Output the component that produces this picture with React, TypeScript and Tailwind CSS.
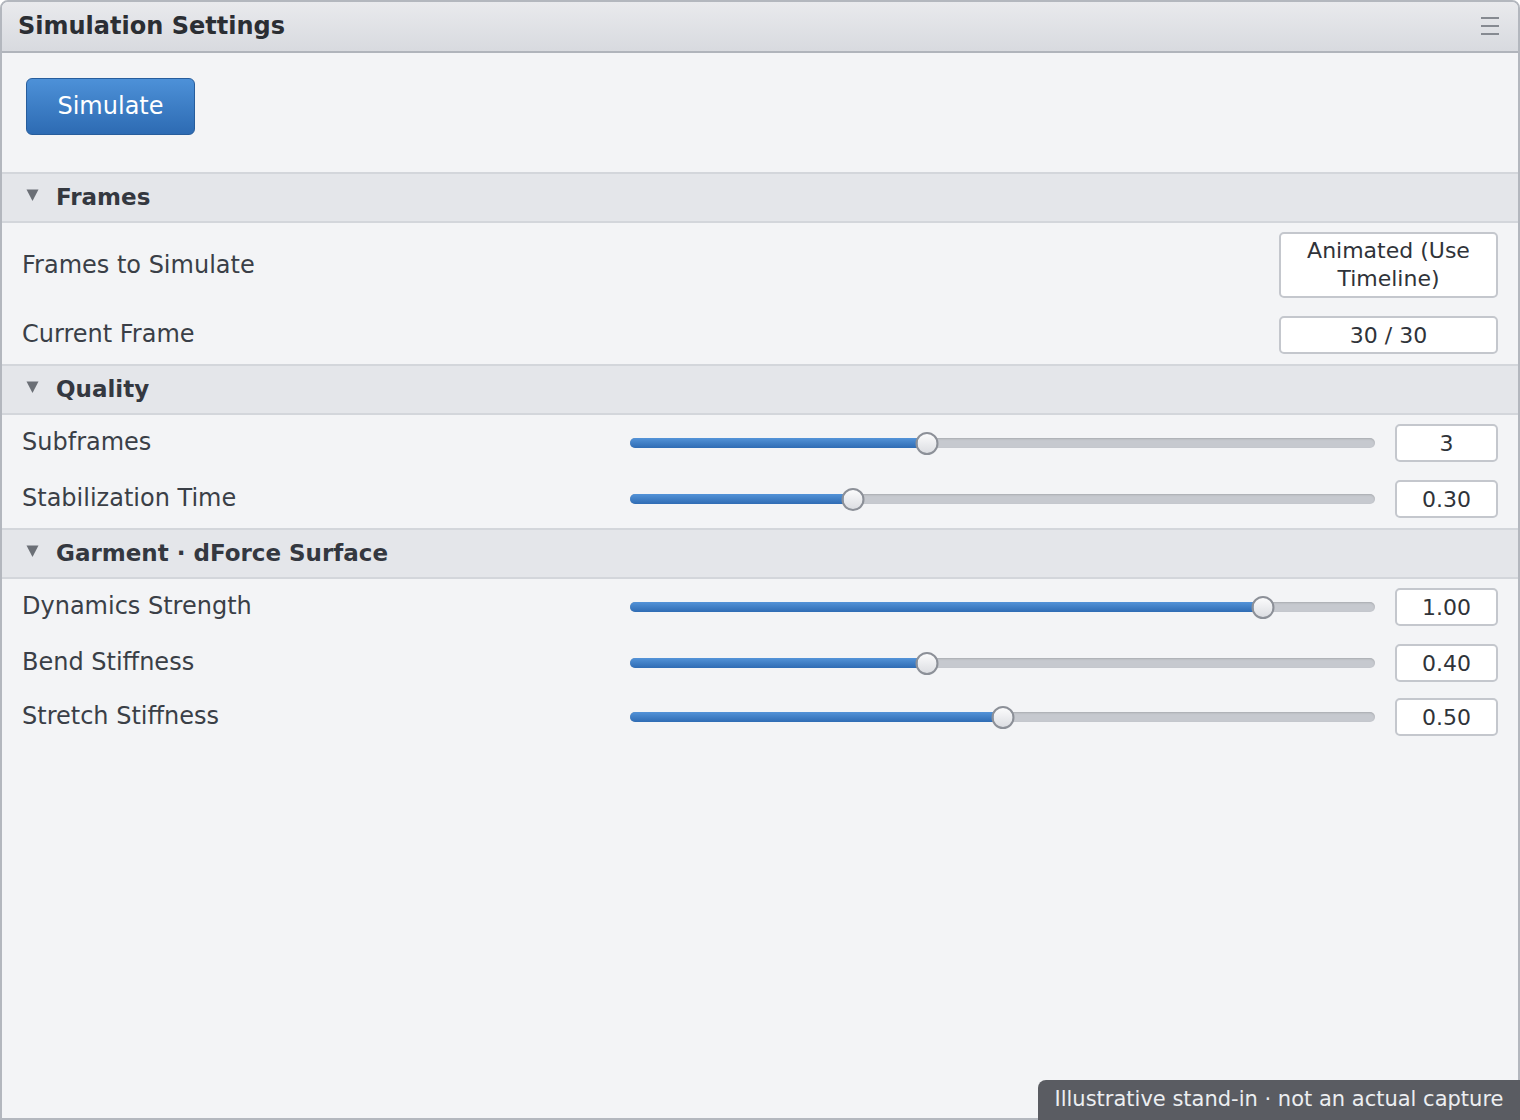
import React from "react";

const font = { fontFamily: '"DejaVu Sans", "Liberation Sans", sans-serif' };

function Tri() {
  return (
    <svg width="13" height="12" viewBox="0 0 13 12" className="shrink-0">
      <polygon points="0.5,0.5 12.5,0.5 6.5,12" fill="#6b6f76" />
    </svg>
  );
}

function SectionHeader({ title }: { title: string }) {
  return (
    <div className="flex h-[51px] shrink-0 items-center gap-[17px] border-y-2 border-[#d3d6db] bg-[#e4e6ea] pl-[24px]">
      <div className="-mt-[6px]">
        <Tri />
      </div>
      <span className="text-[23px] font-bold text-[#343840]">{title}</span>
    </div>
  );
}

function Slider({ pct }: { pct: number }) {
  return (
    <div className="relative h-[24px] flex-1">
      <div className="absolute left-0 right-0 top-[7px] h-[10px] rounded-full bg-[#c6c9cf] shadow-[inset_0_1px_2px_rgba(0,0,0,0.15)]" />
      <div
        className="absolute left-0 top-[7px] h-[10px] rounded-full bg-gradient-to-b from-[#5393d8] to-[#2f6cb4]"
        style={{ width: `${pct}%` }}
      />
      <div
        className="absolute top-[1px] h-[23px] w-[23px] -translate-x-1/2 rounded-full border-2 border-[#8c9098] bg-gradient-to-b from-[#fbfbfc] to-[#dcdee2]"
        style={{ left: `${pct}%` }}
      />
    </div>
  );
}

function SliderRow({ label, pct, value }: { label: string; pct: number; value: string }) {
  return (
    <div className="flex h-[38px] items-center">
      <div className="w-[628px] pl-[20px] text-[24px] text-[#3a3f47] -mt-[2px]">{label}</div>
      <Slider pct={pct} />
      <div className="ml-[20px] mr-[20px] flex h-[38px] w-[103px] items-center justify-center rounded-[5px] border-2 border-[#c4c7cd] bg-white text-[22px] text-[#2f3339]">
        {value}
      </div>
    </div>
  );
}

export default function App() {
  return (
    <div style={font} className="h-[1120px] w-[1520px] overflow-hidden bg-white">
      <div className="relative flex h-[1120px] flex-col rounded-t-[8px] border-2 border-[#b3b7be] bg-[#f3f4f6]">
        <div className="flex h-[51px] shrink-0 items-center justify-between border-b-2 border-[#b0b4bb] bg-gradient-to-b from-[#e9eaed] to-[#d8dadf] pl-[16px] pr-[19px] rounded-t-[6px]">
          <span className="text-[24px] font-bold text-[#2b2e33] -mt-[2px]">Simulation Settings</span>
          <div className="flex flex-col gap-[6px] -mt-[2px]">
            <div className="h-[2px] w-[18px] bg-[#868a91]" />
            <div className="h-[2px] w-[18px] bg-[#868a91]" />
            <div className="h-[2px] w-[18px] bg-[#868a91]" />
          </div>
        </div>
        <div className="h-[119px] shrink-0 pl-[24px] pt-[25px]">
          <button className="flex h-[57px] w-[169px] items-center justify-center rounded-[6px] border border-[#275d9c] bg-gradient-to-b from-[#4d91d8] to-[#2d6bb3] text-[24px] text-white">
            <span className="-mt-[2px]">Simulate</span>
          </button>
        </div>
        <SectionHeader title="Frames" />
        <div className="flex flex-col gap-[18px] pt-[9px] pb-[10px]">
          <div className="flex h-[66px] items-center justify-between">
            <div className="pl-[20px] text-[24px] text-[#3a3f47]">Frames to Simulate</div>
            <div className="mr-[20px] flex h-[66px] w-[219px] items-center justify-center rounded-[5px] border-2 border-[#c4c7cd] bg-white text-center text-[22px] leading-[28px] text-[#2f3339]">
              Animated (Use
              <br />
              Timeline)
            </div>
          </div>
          <div className="flex h-[38px] items-center justify-between">
            <div className="pl-[20px] text-[24px] text-[#3a3f47] -mt-[2px]">Current Frame</div>
            <div className="mr-[20px] flex h-[38px] w-[219px] items-center justify-center rounded-[5px] border-2 border-[#c4c7cd] bg-white text-[22px] text-[#2f3339]">
              30 / 30
            </div>
          </div>
        </div>
        <SectionHeader title="Quality" />
        <div className="flex flex-col gap-[18px] pt-[9px] pb-[10px]">
          <SliderRow label="Subframes" pct={39.9} value="3" />
          <SliderRow label="Stabilization Time" pct={29.9} value="0.30" />
        </div>
        <SectionHeader title="Garment · dForce Surface" />
        <div className="flex flex-col pt-[9px]">
          <SliderRow label="Dynamics Strength" pct={85} value="1.00" />
          <div className="mt-[18px]">
            <SliderRow label="Bend Stiffness" pct={39.9} value="0.40" />
          </div>
          <div className="mt-[16px]">
            <SliderRow label="Stretch Stiffness" pct={50} value="0.50" />
          </div>
        </div>
        <div className="absolute bottom-[-2px] right-[-2px] flex h-[40px] w-[482px] items-center justify-center rounded-tl-[8px] bg-[#5a5c62] text-[21px] text-[#eceef1]">
          Illustrative stand-in · not an actual capture
        </div>
      </div>
    </div>
  );
}
